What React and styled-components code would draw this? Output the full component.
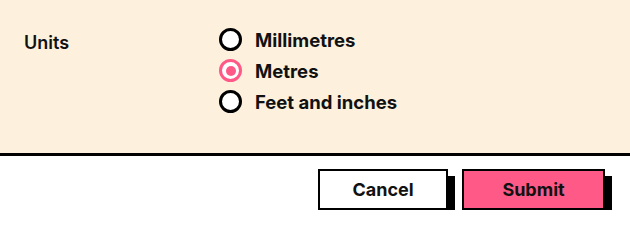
import React, { useState } from "react";
import styled, { createGlobalStyle } from "styled-components";

const GlobalStyle = createGlobalStyle`
  body {
    margin: 0;
    background: #ffffff;
    font-family: Inter, "Liberation Sans", sans-serif;
    color: #111111;
  }
`;

const options = [
  { value: "mm", label: "Millimetres" },
  { value: "m", label: "Metres" },
  { value: "ft", label: "Feet and inches" },
];

export default function App() {
  const [unit, setUnit] = useState("m");

  return (
    <>
      <GlobalStyle />
      <Wrapper>
        <Panel>
          <FieldLabel>Units</FieldLabel>
          <RadioGroup>
            {options.map((opt) => (
              <RadioRow key={opt.value} onClick={() => setUnit(opt.value)}>
                <RadioDot $checked={unit === opt.value} />
                <RadioText>{opt.label}</RadioText>
              </RadioRow>
            ))}
          </RadioGroup>
        </Panel>
        <Footer>
          <Button type="button" $w={130}>Cancel</Button>
          <Button type="button" $w={143} $primary>Submit</Button>
        </Footer>
      </Wrapper>
    </>
  );
}

const Wrapper = styled.div`
  width: 630px;
`;

const Panel = styled.div`
  display: grid;
  grid-template-columns: 195px 1fr;
  align-items: start;
  background: #fdf1de;
  padding: 24px 24px 36px 24px;
  height: 93px;
  border-bottom: 3px solid #000;
`;

const FieldLabel = styled.div`
  font-size: 18px;
  font-weight: 600;
  line-height: 22px;
  padding-top: 8px;
`;

const RadioGroup = styled.div`
  display: flex;
  flex-direction: column;
`;

const RadioRow = styled.label`
  display: flex;
  align-items: center;
  gap: 13px;
  height: 31px;
  cursor: pointer;
`;

const RadioDot = styled.span`
  position: relative;
  width: 23px;
  height: 23px;
  box-sizing: border-box;
  border-radius: 50%;
  background: #fff;
  border: 3px solid ${(p) => (p.$checked ? "#ff5a87" : "#000")};

  &::after {
    content: "";
    display: ${(p) => (p.$checked ? "block" : "none")};
    position: absolute;
    left: 50%;
    top: 50%;
    width: 10px;
    height: 10px;
    margin: -5px 0 0 -5px;
    border-radius: 50%;
    background: #ff5a87;
  }
`;

const RadioText = styled.span`
  font-size: 18.5px;
  font-weight: 700;
`;

const Footer = styled.div`
  display: flex;
  justify-content: flex-end;
  gap: 14px;
  padding: 13px 25px 0 0;
`;

const Button = styled.button`
  width: ${(p) => p.$w}px;
  height: 41px;
  border: 2px solid #000;
  background: ${(p) => (p.$primary ? "#ff5a87" : "#fff")};
  box-shadow: 7px 7px 0 #000;
  font-family: Inter, "Liberation Sans", sans-serif;
  font-size: 18px;
  font-weight: 700;
  color: #111;
  cursor: pointer;
`;
